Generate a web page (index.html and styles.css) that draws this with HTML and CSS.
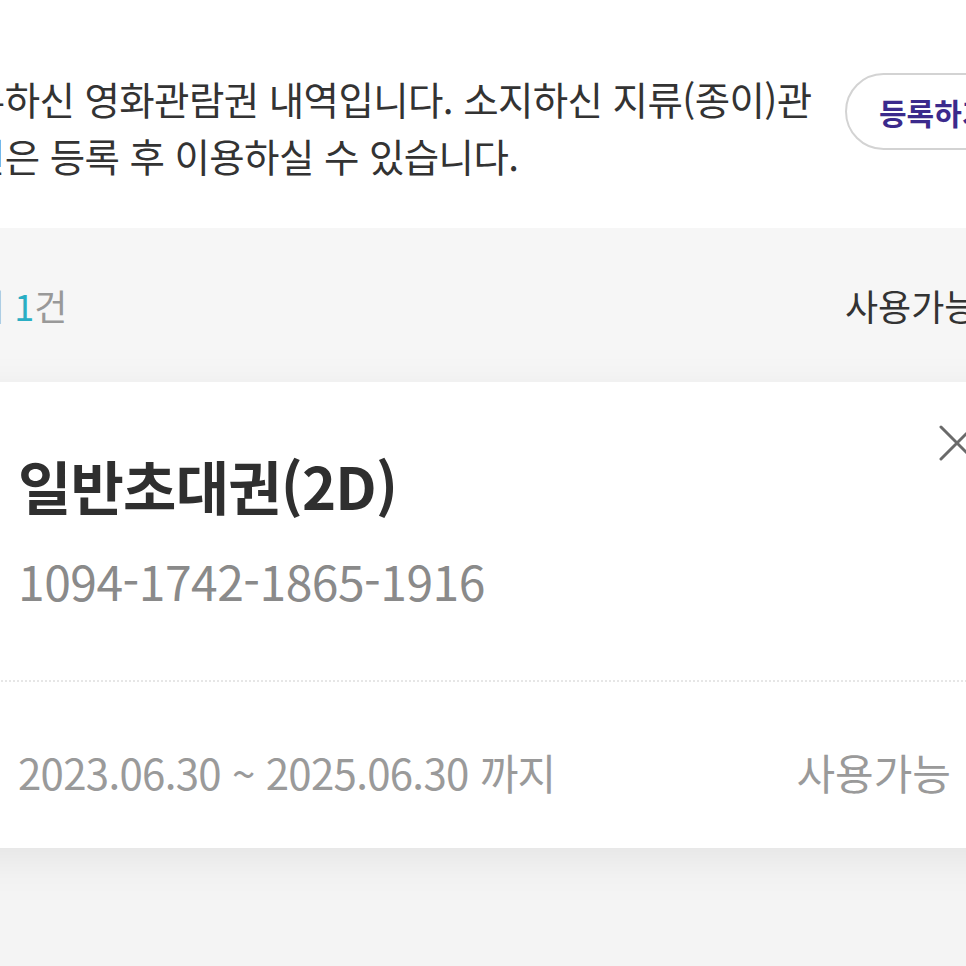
FILE: index.html
```html
<!DOCTYPE html>
<html lang="ko">
<head>
  <meta charset="UTF-8" />
  <meta name="viewport" content="width=device-width, initial-scale=1.0" />
  <title>영화관람권</title>
  <link rel="stylesheet" href="styles.css">
</head>
<body>
  <div class="page">
    <div class="intro">
      <p class="intro-text">보유하신 영화관람권 내역입니다. 소지하신 지류(종이)관람권은 등록 후 이용하실 수 있습니다.</p>
      <button class="register-btn">등록하기</button>
    </div>

    <div class="list-head">
      <span class="count">전체 <em>1</em>건</span>
      <span class="filter">사용가능 <span class="arrow">&#9662;</span></span>
    </div>

    <div class="ticket">
      <div class="ticket-top">
        <h2 class="ticket-name">일반초대권(2D)</h2>
        <p class="ticket-code">1094-1742-1865-1916</p>
        <button class="close-btn" aria-label="삭제">
          <svg width="38" height="38" viewBox="0 0 38 38">
            <path d="M3 3 L35 35 M35 3 L3 35" stroke="#6a6a6a" stroke-width="3" stroke-linecap="round" fill="none" />
          </svg>
        </button>
      </div>
      <div class="ticket-bottom">
        <span class="period">2023.06.30 ~ 2025.06.30 까지</span>
        <span class="status">사용가능</span>
      </div>
    </div>
  </div>
</body>
</html>
```

FILE: styles.css
```css
* {
  margin: 0;
  padding: 0;
  box-sizing: border-box;
  font-family: "Noto Sans CJK KR", "Noto Sans", sans-serif;
}

body {
  background-color: #f4f4f4;
  overflow: hidden;
  height: 966px;
}

.page {
  width: 1100px;
  margin-left: -62px;
}

.intro {
  background-color: #fff;
  display: flex;
  align-items: flex-start;
  padding: 70px 0 44px;
}

.intro-text {
  width: 885px;
  margin-left: -3px;
  flex-shrink: 0;
  font-size: 38.5px;
  line-height: 57px;
  color: #333;
  letter-spacing: -0.6px;
}

.register-btn {
  margin-top: 3px;
  margin-left: 25px;
  height: 77px;
  padding: 0 32px;
  border: 2px solid #d3d3d3;
  border-radius: 40px;
  background: #fff;
  color: #3b2a8c;
  font-size: 30px;
  font-weight: 700;
  white-space: nowrap;
}

.list-head {
  background-color: #f6f6f6;
  height: 154px;
  display: flex;
  align-items: center;
  font-size: 36px;
}

.count {
  flex: 1;
  color: #999;
}

.count em {
  font-style: normal;
  color: #2aaec4;
}

.filter {
  width: 193px;
  color: #333;
  white-space: nowrap;
}

.filter .arrow {
  color: #666;
  font-size: 24px;
}

.ticket {
  background-color: #fff;
  box-shadow: 0 10px 40px rgba(0, 0, 0, 0.07);
}

.ticket-top {
  position: relative;
  padding: 73px 80px 72px;
  border-bottom: 2px dotted #e6e6e6;
}

.ticket-name {
  font-size: 58px;
  line-height: 60px;
  font-weight: 700;
  color: #2f2f2f;
  letter-spacing: -0.8px;
}

.ticket-code {
  margin-top: 37px;
  font-size: 48px;
  line-height: 56px;
  color: #8a8a8a;
  letter-spacing: -0.5px;
}

.close-btn {
  position: absolute;
  top: 42px;
  left: 1000px;
  width: 38px;
  height: 38px;
  border: none;
  background: none;
}

.ticket-bottom {
  display: flex;
  justify-content: space-between;
  padding: 62px 87px 48px 80px;
  font-size: 42px;
  line-height: 56px;
  color: #9a9a9a;
}

.period {
  letter-spacing: -0.7px;
}
```
